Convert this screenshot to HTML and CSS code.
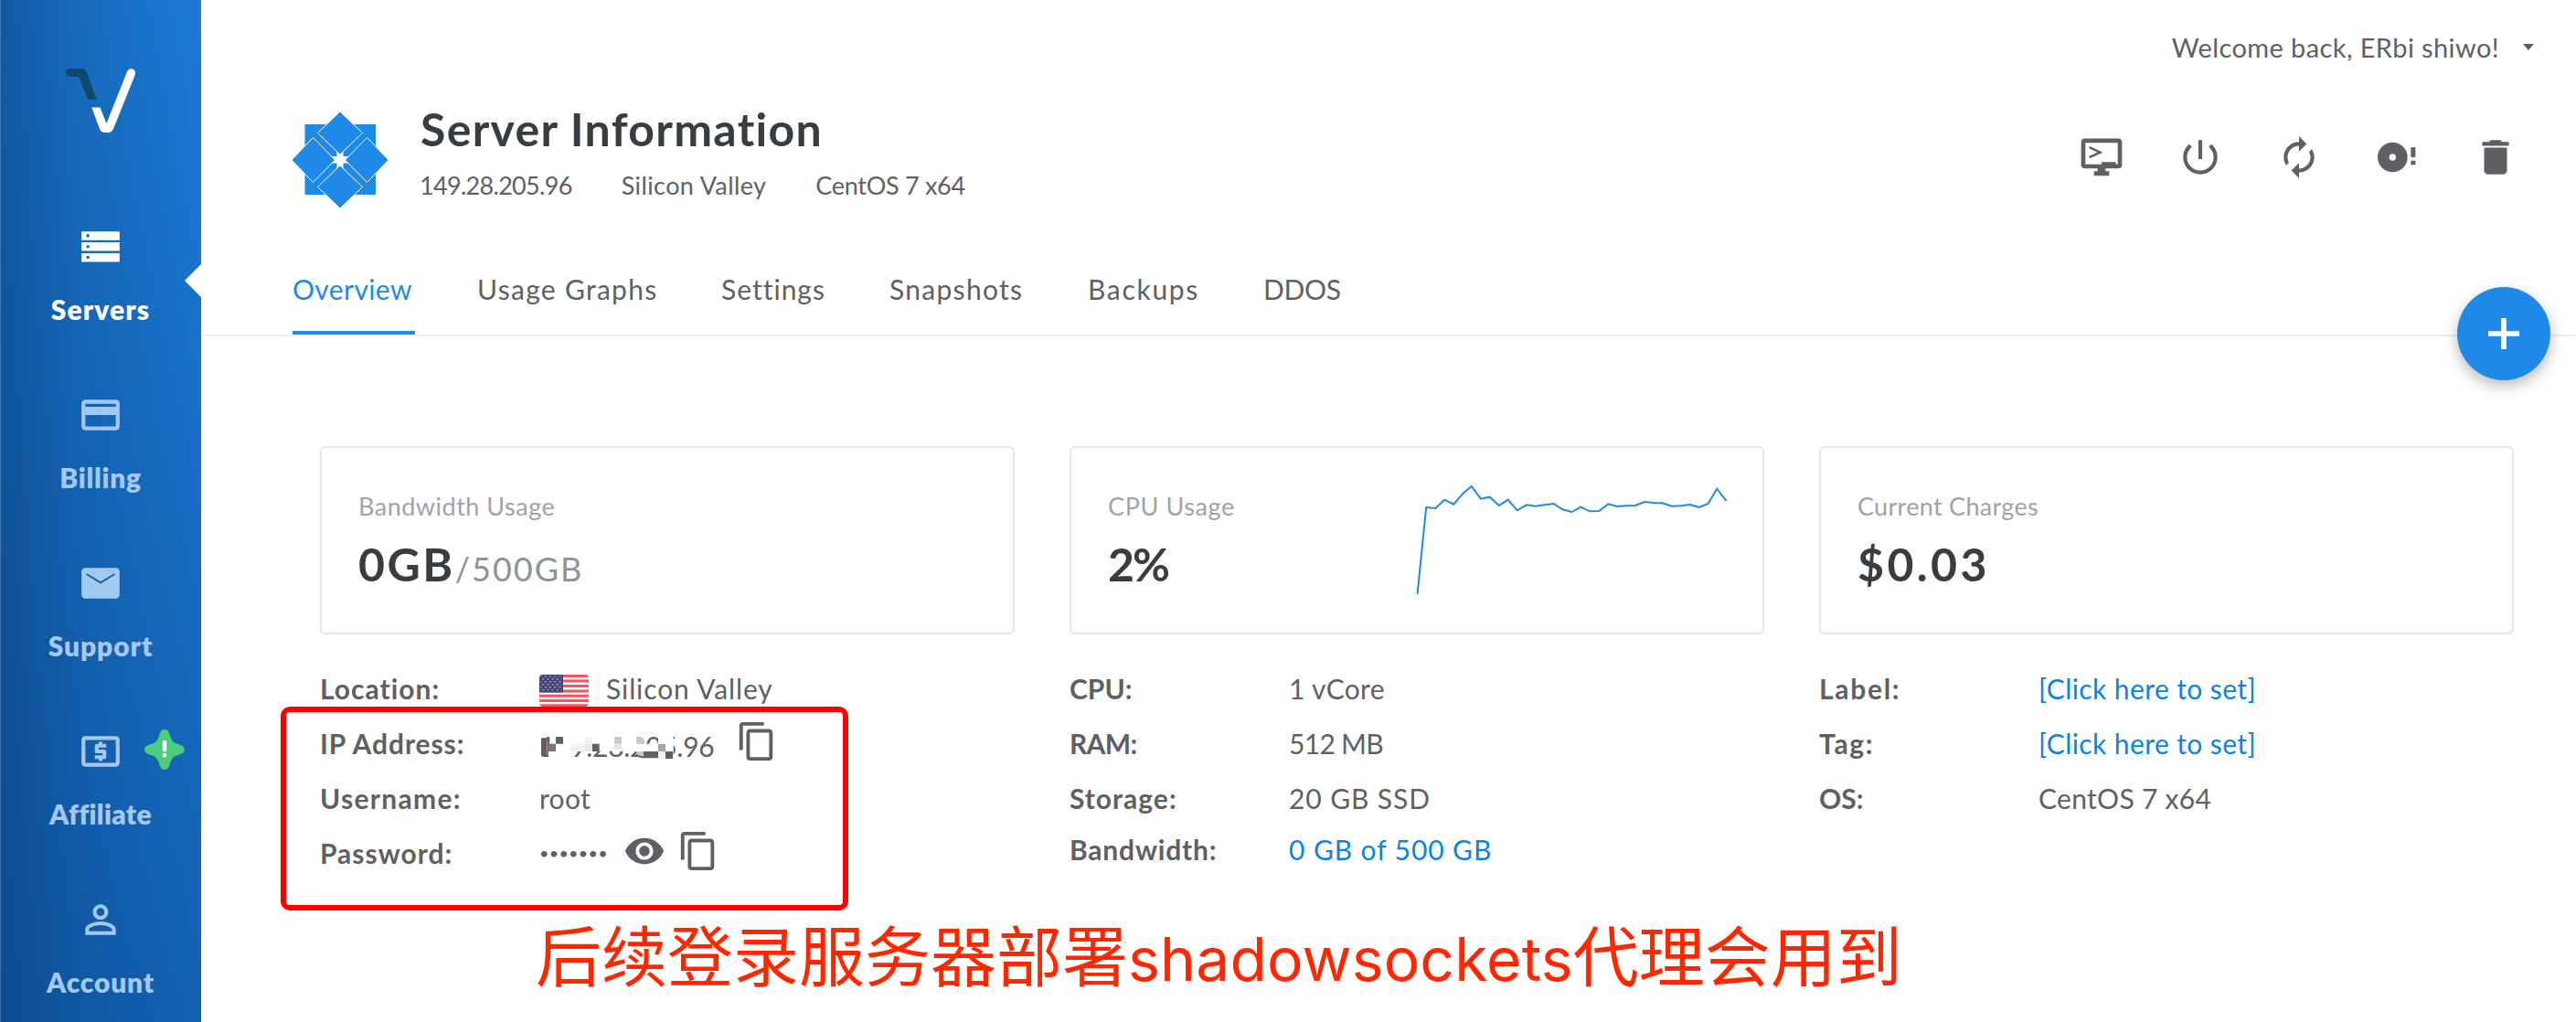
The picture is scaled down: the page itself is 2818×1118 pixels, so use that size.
FILE: index.html
```
<!DOCTYPE html>
<html lang="en">
<head>
<meta charset="utf-8">
<title>Server Information</title>
<link rel="stylesheet" href="styles.css">
</head>
<body>
<div class="app">
  <nav class="sidebar">
    <svg class="brand" viewBox="72 75 76 70">
      <path fill="#10486a" d="M76.5 75H89q4 0 5.600 3.600L105.700 109h-9.400L86.300 84H76.500a4.500 4.500 0 0 1 0-9z"/>
      <path fill="#fff" d="M100.300 117.500h9.100L116.500 135l22.700-57a4.700 4.700 0 0 1 8.600 3.800L124 141q-2 4-6 4h-3.500q-4 0-5.500-4z"/>
    </svg>
    <a class="nav-item active">
      <svg class="nav-icon" viewBox="0 0 24 24"><path fill-rule="evenodd" d="M2 3.900h20v4.600H2zm2.600 1.500v1.500h1.500V5.400zM2 9.600h20v4.600H2zm2.600 1.500v1.500h1.500v-1.500zM2 15.300h20v4.600H2zm2.600 1.500v1.500h1.500v-1.500z"/></svg>
      <span class="k11">Servers</span>
    </a>
    <a class="nav-item">
      <svg class="nav-icon" viewBox="0 0 24 24"><path d="M20 4H4c-1.110 0-1.990.890-1.990 2L2 18c0 1.110.890 2 2 2h16c1.110 0 2-.890 2-2V6c0-1.110-.890-2-2-2zm0 14H4v-6h16v6zm0-10.300H4V6.100h16v1.600z"/></svg>
      <span class="k7">Billing</span>
    </a>
    <a class="nav-item">
      <svg class="nav-icon" viewBox="0 0 24 24"><rect x="2" y="4" width="20" height="16" rx="2"/><path class="fold" d="M4.600 7.200L12 11.700l7.400-4.500"/></svg>
      <span class="k9">Support</span>
    </a>
    <a class="nav-item">
      <svg class="nav-icon" viewBox="0 0 24 24"><path d="M11 17h2v-1h1c.550 0 1-.450 1-1v-3c0-.550-.450-1-1-1h-3v-1h4V8h-2V7h-2v1h-1c-.550 0-1 .450-1 1v3c0 .550.450 1 1 1h3v1H9v2h2v1zm9-13H4c-1.110 0-1.990.890-1.990 2L2 18c0 1.110.890 2 2 2h16c1.110 0 2-.890 2-2V6c0-1.110-.890-2-2-2zm0 14H4V6h16v12z"/></svg>
      <span class="k3">Affiliate</span>
      <svg class="alert" viewBox="0 0 44 44"><path fill="#4ace7c" d="M22 0c3 0 4.500 2 5.300 4.500C28.500 9 30 13 34 15c3 1.500 10 2.200 10 7s-7 5.500-10 7c-4 2-5.500 6-6.700 10.500C26.500 42 25 44 22 44s-4.500-2-5.300-4.500C15.500 35 14 31 10 29c-3-1.500-10-2.200-10-7s7-5.500 10-7c4-2 5.500-6 6.700-10.500C17.500 2 19 0 22 0z"/><rect fill="#fff" x="19.800" y="12" width="4.400" height="12" rx="1"/><circle fill="#fff" cx="22" cy="28.200" r="2.400"/></svg>
    </a>
    <a class="nav-item">
      <svg class="nav-icon" viewBox="0 0 24 24"><path d="M12 5.900c1.160 0 2.100.940 2.100 2.100s-.940 2.100-2.100 2.100S9.900 9.160 9.900 8s.940-2.100 2.100-2.100m0 9c2.970 0 6.100 1.460 6.100 2.100v1.100H5.900V17c0-.640 3.130-2.100 6.100-2.100M12 4C9.790 4 8 5.790 8 8s1.790 4 4 4 4-1.790 4-4-1.790-4-4-4zm0 9c-2.670 0-8 1.340-8 4v3h16v-3c0-2.660-5.330-4-8-4z"/></svg>
      <span class="k8">Account</span>
    </a>
    <span class="pointer"></span>
  </nav>

  <main class="main">
    <div class="topbar"><span class="k4">Welcome back, ERbi shiwo!</span><span class="caret"></span></div>

    <header class="head">
      <svg class="os-logo" viewBox="0 0 106 106">
        <path class="os-fill" d="M14.500 14h35v35h-35zM56.500 14H92v35H56.500zM14.500 56.500h35V91h-35zM56.500 56.500H92V91H56.500z"/>
        <path class="os-gem" d="M53 0l24.500 23.500L53 47 28.500 23.500zM53 59l24.500 23.500L53 106 28.500 82.500zM0 53l23.500-24.500L47.500 53 23.500 77.500zM106 53L82.500 28.500 58.500 53l24 24.500z"/>
      </svg>
      <div class="head-text">
        <h1 class="k13">Server Information</h1>
        <div class="meta"><span class="n7">149.28.205.96</span><span class="k4">Silicon Valley</span><span class="n3">CentOS 7 x64</span></div>
      </div>
      <div class="actions">
        <svg viewBox="43 35 150 150"><path fill="none" stroke="currentColor" stroke-width="14" d="M64 55.500h108q6 0 6 6v72.500q0 6-6 6H64q-6 0-6-6V61.500q0-6 6-6z"/><path fill="none" stroke="currentColor" stroke-width="8" stroke-linecap="round" d="M81 79l32 15-32 15"/><path d="M118 126h47v10h-47zM105 145h26v11h12v15H93v-15h12z"/></svg>
        <svg viewBox="0 0 24 24"><path d="M13 3h-2v10h2V3zm4.830 2.170l-1.420 1.420C17.990 7.860 19 9.810 19 12c0 3.870-3.130 7-7 7s-7-3.130-7-7c0-2.190 1.010-4.140 2.580-5.420L6.170 5.170C4.230 6.820 3 9.260 3 12c0 4.970 4.030 9 9 9s9-4.030 9-9c0-2.740-1.230-5.180-3.170-6.830z"/></svg>
        <svg viewBox="0 0 24 24"><path d="M12 6v3l4-4-4-4v3c-4.420 0-8 3.580-8 8 0 1.570.460 3.030 1.240 4.260L6.700 14.800c-.450-.830-.700-1.790-.700-2.800 0-3.310 2.690-6 6-6zm6.760 1.740L17.300 9.200c.440.840.700 1.790.700 2.800 0 3.310-2.690 6-6 6v-3l-4 4 4 4v-3c4.420 0 8-3.580 8-8 0-1.570-.460-3.030-1.240-4.260z"/></svg>
        <svg viewBox="1013 35 150 150"><path fill-rule="evenodd" d="M1025 110a49 49 0 1 0 98 0a49 49 0 1 0-98 0zm38 0a11 11 0 1 1 22 0a11 11 0 1 1-22 0zM1134 78h15v32h-15zM1134 121h15v14h-15z"/></svg>
        <svg viewBox="0 0 24 24"><path d="M6 19c0 1.100.900 2 2 2h8c1.100 0 2-.900 2-2V7H6v12zM19 4h-3.500l-1-1h-5l-1 1H5v2h14V4z"/></svg>
      </div>
    </header>

    <div class="tabs">
      <a class="tab tab-on k4">Overview</a><a class="tab k13">Usage Graphs</a><a class="tab k10">Settings</a><a class="tab k13">Snapshots</a><a class="tab k17">Backups</a><a class="tab n3">DDOS</a>
    </div>

    <section class="grid">
      <div class="card">
        <div><div class="card-label k5">Bandwidth Usage</div>
        <div class="card-value"><span class="k25">0GB</span><small class="k20">/500GB</small></div></div>
      </div>
      <div class="card">
        <div><div class="card-label k6">CPU Usage</div>
        <div class="card-value n20">2%</div></div>
        <svg class="chart" viewBox="764 180 664 362" preserveAspectRatio="none"><polyline points="765,540 784,255 804,258 823,230 843,245 863,209 881,186 901,227 920,221 940,249 959,230 979,265 999,247 1018,251 1037,247 1057,243 1076,262 1096,270 1115,254 1134,268 1154,267 1174,244 1193,252 1212,250 1232,249 1252,237 1271,240 1290,241 1310,251 1330,250 1349,246 1369,255 1388,243 1407,194 1427,234"/></svg>
      </div>
      <div class="card">
        <div><div class="card-label k3">Current Charges</div>
        <div class="card-value k34">$0.03</div></div>
      </div>

      <dl class="info">
        <dt class="k10">Location:</dt>
        <dd><svg class="flag" viewBox="0 0 54 35"><defs><clipPath id="fc"><rect width="54" height="35" rx="4"/></clipPath><pattern id="st" width="5.200" height="6" patternUnits="userSpaceOnUse"><circle cx="1.600" cy="1.800" r=".9" fill="#b9b8d6"/><circle cx="4.200" cy="4.800" r=".9" fill="#b9b8d6"/></pattern></defs>
          <g clip-path="url(#fc)"><rect width="54" height="35" fill="#f8f8fb"/><path stroke="#f25767" stroke-width="2.900" d="M0 1.500h54M0 7h54M0 12.500h54M0 18h54M0 23.300h54M0 28.500h54M0 33.800h54"/><rect width="26" height="19.500" fill="#444479"/><rect x="1.500" y="1.500" width="23" height="16" fill="url(#st)"/></g></svg><span class="k9">Silicon Valley</span></dd>
        <dt class="k9">IP Address:</dt>
        <dd><span class="ip">149.28.205.96<svg class="mosaic" viewBox="30 225 465 78"><path fill="#fff" d="M108 225h24v78h-24zM84 251h24v52H84zM60 276h48v27H60zM132 225h195v50H132zM228 251h48v16h-48zM327 251h93v25h-93zM420 225h50v78h-24v-25h-26zM300 225h48v26h-48z"/><path fill="#77777b" d="M60 251h24v25H60z"/><path fill="#5f6064" d="M36 232h18v60H36zM84 228h24v23H84zM204 251h23v25h-23zM348 276h72v22h-48q-20 0-24-12zM444 276h24v24h-24z"/><path fill="#f2f2f2" d="M132 251h48v25h-48zM180 228h24v23h-24zM420 276h24v24h-24z"/><path fill="#e6e6e7" d="M180 251h24v25h-24zM276 251h24v18h-24z"/><path fill="#c9cacd" d="M276 228h24v23h-24zM348 276h24v16q-18 0-24-10zM348 228q20 0 24 12v11h-24z"/><path fill="#a6a7aa" d="M420 252h24v24h-24z"/></svg></span><svg class="ico copy-ip" viewBox="0 0 24 24"><path d="M16 1H4c-1.100 0-2 .900-2 2v14h2V3h12V1zm3 4H8c-1.100 0-2 .900-2 2v14c0 1.100.900 2 2 2h11c1.100 0 2-.900 2-2V7c0-1.100-.900-2-2-2zm0 16H8V7h11v14z"/></svg></dd>
        <dt class="k13">Username:</dt><dd class="k3">root</dd>
        <dt class="k10">Password:</dt>
        <dd><span class="dots">•••••••</span><svg class="ico" viewBox="0 0 24 24"><path d="M12 4.500C7 4.500 2.730 7.610 1 12c1.730 4.390 6 7.500 11 7.500s9.270-3.110 11-7.500c-1.730-4.390-6-7.500-11-7.500zM12 17c-2.760 0-5-2.240-5-5s2.240-5 5-5 5 2.240 5 5-2.240 5-5 5zm0-8c-1.660 0-3 1.340-3 3s1.340 3 3 3 3-1.340 3-3-1.340-3-3-3z"/></svg><svg class="ico copy-pw" viewBox="0 0 24 24"><path d="M16 1H4c-1.100 0-2 .900-2 2v14h2V3h12V1zm3 4H8c-1.100 0-2 .900-2 2v14c0 1.100.900 2 2 2h11c1.100 0 2-.900 2-2V7c0-1.100-.900-2-2-2zm0 16H8V7h11v14z"/></svg></dd>
      </dl>
      <dl class="info">
        <dt>CPU:</dt><dd class="k3">1 vCore</dd>
        <dt class="n7">RAM:</dt><dd class="n7">512 MB</dd>
        <dt class="k10">Storage:</dt><dd class="k9">20 GB SSD</dd>
        <dt class="short k8">Bandwidth:</dt><dd class="short k9 link">0 GB of 500 GB</dd>
      </dl>
      <dl class="info">
        <dt class="k17">Label:</dt><dd class="link k4">[Click here to set]</dd>
        <dt class="k17">Tag:</dt><dd class="link k4">[Click here to set]</dd>
        <dt>OS:</dt><dd class="k3">CentOS 7 x64</dd>
      </dl>
    </section>
  </main>

  <button class="fab"><svg viewBox="0 0 34 34"><path d="M14.200 0h5.600v14.200H34v5.600H19.800V34h-5.600V19.800H0v-5.600h14.200z"/></svg></button>
  <div class="callout"></div>
  <div class="note" lang="zh-CN">后续登录服务器部署<span>shadowsockets</span>代理会用到</div>
</div>
</body>
</html>
```
FILE: styles.css
```
* { box-sizing: border-box; }
body { margin: 0; background: #fff; color: #5f6064; font-family: Lato, "Noto Sans CJK SC", sans-serif; font-size: 30px; }
svg { display: block; flex: none; fill: currentColor; }
.app { position: relative; display: flex; width: 2818px; height: 1118px; overflow: hidden; }

.sidebar {
  position: relative; flex: none; width: 220px; padding-top: 75px;
  display: flex; flex-direction: column; align-items: center;
  background: linear-gradient(to right, rgba(8, 48, 100, .45), rgba(8, 48, 100, .2) 40%, rgba(8, 48, 100, 0)), linear-gradient(to bottom, #1b7ad5, #1261b3);
  box-shadow: inset 1px 0 rgba(255, 255, 255, .2);
}
.brand { width: 76px; height: 70px; margin-bottom: 100px; }
.nav-item { position: relative; width: 220px; height: 184px; display: flex; flex-direction: column; align-items: center; gap: 25px; flex: none; color: #a3c9f1; font-weight: 800; line-height: 36px; }
.nav-item.active { color: #fff; }
.nav-icon { width: 50px; height: 50px; }
.fold { fill: none; stroke: #125da9; stroke-width: .9; }
.alert { position: absolute; left: 158px; top: 1px; width: 44px; height: 44px; }
.pointer { position: absolute; right: 0; top: 289px; border: solid transparent; border-width: 18px 18px 18px 0; border-right-color: #fff; }

.main { flex: 1; }
.topbar { height: 102px; padding-right: 46px; display: flex; align-items: center; justify-content: flex-end; gap: 26px; font-size: 29px; }
.caret { border: solid transparent; border-width: 7px 6px 0; border-top-color: currentColor; }
.head { display: flex; height: 164px; padding: 0 63px 0 99px; }
.os-logo { width: 106px; height: 106px; margin: 20px 35px 0 0; }
.os-fill { fill: #1e89e6; }
.os-gem { fill: #1e89e6; stroke: #fff; stroke-width: 1; }
.head-text { padding-top: 9px; flex: 1; }
h1 { margin: 0 0 16px; font-size: 50px; line-height: 60px; font-weight: 700; color: #373d41; }
.meta { display: flex; gap: 54px; margin-left: -1px; font-size: 27px; line-height: 32px; }
.actions { display: flex; gap: 57.700px; padding-top: 44.700px; }
.actions svg { width: 50px; height: 50px; }

.tabs { display: flex; gap: 68px; height: 102px; padding-left: 100px; border-bottom: 2px solid #eceff3; line-height: 101px; }
.tab { min-width: 134px; height: 100px; }
.tab:nth-child(2) { min-width: 199px; }
.tab:nth-child(3) { min-width: 116px; }
.tab:nth-child(4) { min-width: 149px; }
.tab:nth-child(5) { min-width: 124px; }
.tab-on { color: #1e89e6; box-shadow: inset 0 -4px #1e89e6; }

.grid { display: grid; grid-template-columns: repeat(3, 760px); column-gap: 60px; row-gap: 29px; padding: 120px 0 0 130px; }
.card { display: flex; justify-content: space-between; height: 206px; padding: 48px 39px 0 40px; border: 2px solid #e4e8ec; border-radius: 6px; }
.card-label { font-size: 27px; line-height: 32px; color: #9fa3a6; }
.card-value { margin-top: 17px; font-size: 50px; line-height: 60px; font-weight: 700; color: #373d41; }
.card-value small { font-size: 36px; font-weight: 400; color: #8a949b; }
.chart { width: 339px; height: 120.700px; margin-top: -8px; }
.chart polyline { fill: none; stroke: #1e89e6; stroke-width: 2; vector-effect: non-scaling-stroke; }

.info { margin: 0; display: grid; grid-template-columns: 240px 1fr; grid-auto-rows: 60px; line-height: 60px; }
.info dt { font-weight: 700; white-space: nowrap; }
.info dd { margin: 0; display: flex; align-items: center; }
.info .short { line-height: 52px; height: 52px; }
.link { color: #0a84e0; }
.flag { width: 54px; height: 35px; margin: 5px 19px 0 0; }
.ip { position: relative; width: 191px; top: 3px; letter-spacing: -.3px; }
.mosaic { position: absolute; left: 0; top: 18.500px; width: 155px; height: 26px; }
.ico { width: 46px; height: 46px; margin-top: -4px; }
.copy-ip { margin-left: 23.500px; }
.copy-pw { margin-left: 13px; }
.dots { width: 92px; font-size: 18px; letter-spacing: .260px; }

.fab { position: absolute; left: 2688px; top: 314px; width: 102px; height: 102px; padding: 34px; border: 0; border-radius: 50%; background: #1e89e6; color: #fff; box-shadow: 0 6px 16px rgba(0, 0, 0, .28); }
.callout { position: absolute; left: 307px; top: 773px; width: 621px; height: 223px; border: 6px solid #f00; border-radius: 10px; }
.note { position: absolute; left: 586px; top: 1006px; font: 400 72px/72px "Noto Sans CJK SC", sans-serif; color: #ff2600; white-space: nowrap; }
.note span { font-family: Inter, sans-serif; font-size: 66px; letter-spacing: .150px; }

/* tracking, in tenths of a pixel */
.n20 { letter-spacing: -2px; }
.n7 { letter-spacing: -.700px; }
.n3 { letter-spacing: -.300px; }
.k3 { letter-spacing: .300px; }
.k4 { letter-spacing: .400px; }
.k5 { letter-spacing: .500px; }
.k6 { letter-spacing: .600px; }
.k7 { letter-spacing: .700px; }
.k8 { letter-spacing: .800px; }
.k9 { letter-spacing: .900px; }
.k10 { letter-spacing: 1px; }
.k11 { letter-spacing: 1.100px; }
.k13 { letter-spacing: 1.300px; }
.k17 { letter-spacing: 1.700px; }
.k20 { letter-spacing: 2px; }
.k25 { letter-spacing: 2.500px; }
.k34 { letter-spacing: 3.400px; }
```
